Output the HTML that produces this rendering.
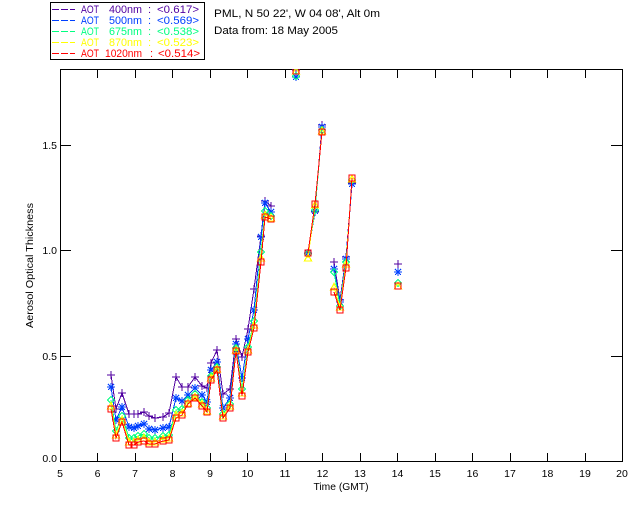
<!DOCTYPE html>
<html><head><meta charset="utf-8"><style>
html,body{margin:0;padding:0;background:#fff;width:640px;height:512px;overflow:hidden}
svg{display:block}
text{font-family:"Liberation Sans",sans-serif;font-size:10.5px;fill:#000}
.l text{font-size:11px}
.p{fill:#5000a0}.b{fill:#0040ff}.g{fill:#00ff80}.y{fill:#ffff00}.r{fill:#ff0000}
</style></head><body>
<svg width="640" height="512" viewBox="0 0 640 512" xmlns="http://www.w3.org/2000/svg">
<defs>
<marker id="mp" markerUnits="userSpaceOnUse" markerWidth="11" markerHeight="11" refX="5.5" refY="5.5" overflow="visible"><path d="M1.5 5.5H9.5M5.5 1.5V9.5" stroke="#5000a0" stroke-width="1" fill="none" shape-rendering="crispEdges"/></marker>
<marker id="mb" markerUnits="userSpaceOnUse" markerWidth="11" markerHeight="11" refX="5.5" refY="5.5" overflow="visible"><path d="M1.5 5.5H9.5M5.5 1.5V9.5M2.5 2.5L8.5 8.5M8.5 2.5L2.5 8.5" stroke="#0040ff" stroke-width="1" fill="none" shape-rendering="crispEdges"/><rect x="4" y="4" width="3" height="3" fill="#0040ff" shape-rendering="crispEdges"/></marker>
<marker id="mg" markerUnits="userSpaceOnUse" markerWidth="11" markerHeight="11" refX="5.5" refY="5.5" overflow="visible"><path d="M5.5 2L9 5.5L5.5 9L2 5.5Z" stroke="#00ff80" stroke-width="1" fill="none" shape-rendering="crispEdges"/></marker>
<marker id="my" markerUnits="userSpaceOnUse" markerWidth="11" markerHeight="11" refX="5.5" refY="5.5" overflow="visible"><path d="M5.5 2L9 8.5L2 8.5Z" stroke="#ffff00" stroke-width="1.3" fill="none" shape-rendering="crispEdges"/></marker>
<marker id="mr" markerUnits="userSpaceOnUse" markerWidth="11" markerHeight="11" refX="5.5" refY="5.5" overflow="visible"><rect x="2.5" y="2.5" width="6" height="6" stroke="#ff0000" stroke-width="1" fill="none" shape-rendering="crispEdges"/></marker>
<clipPath id="plot"><rect x="60" y="69" width="563" height="393"/></clipPath>
</defs>

<!-- legend -->
<rect x="50.5" y="2.5" width="154" height="57" fill="#fff" stroke="#000" stroke-width="1" shape-rendering="crispEdges"/>
<g stroke-width="1" stroke-dasharray="7 2" shape-rendering="crispEdges">
<path d="M52 9.5H75" stroke="#5000a0"/>
<path d="M52 20.5H75" stroke="#0040ff"/>
<path d="M52 31.5H75" stroke="#00ff80"/>
<path d="M52 42.5H75" stroke="#ffff00"/>
<path d="M52 53.5H75" stroke="#ff0000"/>
</g>
<g class="l">
<text class="p" x="81" y="13" textLength="18" lengthAdjust="spacingAndGlyphs">AOT</text><text class="p" x="109" y="13" textLength="33" lengthAdjust="spacingAndGlyphs">400nm</text><text class="p" x="148" y="13">:</text><text class="p" x="157" y="13" textLength="42" lengthAdjust="spacingAndGlyphs">&lt;0.617&gt;</text>
<text class="b" x="81" y="24" textLength="18" lengthAdjust="spacingAndGlyphs">AOT</text><text class="b" x="109" y="24" textLength="33" lengthAdjust="spacingAndGlyphs">500nm</text><text class="b" x="148" y="24">:</text><text class="b" x="157" y="24" textLength="42" lengthAdjust="spacingAndGlyphs">&lt;0.569&gt;</text>
<text class="g" x="81" y="35" textLength="18" lengthAdjust="spacingAndGlyphs">AOT</text><text class="g" x="109" y="35" textLength="33" lengthAdjust="spacingAndGlyphs">675nm</text><text class="g" x="148" y="35">:</text><text class="g" x="157" y="35" textLength="42" lengthAdjust="spacingAndGlyphs">&lt;0.538&gt;</text>
<text class="y" x="81" y="46" textLength="18" lengthAdjust="spacingAndGlyphs">AOT</text><text class="y" x="109" y="46" textLength="33" lengthAdjust="spacingAndGlyphs">870nm</text><text class="y" x="148" y="46">:</text><text class="y" x="157" y="46" textLength="42" lengthAdjust="spacingAndGlyphs">&lt;0.523&gt;</text>
<text class="r" x="81" y="57" textLength="18" lengthAdjust="spacingAndGlyphs">AOT</text><text class="r" x="105" y="57" textLength="37" lengthAdjust="spacingAndGlyphs">1020nm</text><text class="r" x="150" y="57">:</text><text class="r" x="158" y="57" textLength="42" lengthAdjust="spacingAndGlyphs">&lt;0.514&gt;</text>
<text x="214" y="17" textLength="166" lengthAdjust="spacingAndGlyphs">PML, N 50 22', W 04 08', Alt 0m</text>
<text x="214" y="34" textLength="124" lengthAdjust="spacingAndGlyphs">Data from: 18 May 2005</text>
</g>

<!-- axes -->
<g stroke="#000" stroke-width="1" fill="none" shape-rendering="crispEdges">
<rect x="60.5" y="69.5" width="562" height="392"/>
<path d="M97.5 461V453M135.5 461V453M172.5 461V453M210.5 461V453M247.5 461V453M285.5 461V453M322.5 461V453M360.5 461V453M397.5 461V453M435.5 461V453M472.5 461V453M510.5 461V453M547.5 461V453M585.5 461V453"/>
<path d="M97.5 70V78M135.5 70V78M172.5 70V78M210.5 70V78M247.5 70V78M285.5 70V78M322.5 70V78M360.5 70V78M397.5 70V78M435.5 70V78M472.5 70V78M510.5 70V78M547.5 70V78M585.5 70V78"/>
<path d="M60 356.5H71M60 250.5H71M60 145.5H71M622 356.5H611M622 250.5H611M622 145.5H611"/>
</g>
<g text-anchor="middle">
<text x="60" y="477">5</text><text x="97.5" y="477">6</text><text x="135" y="477">7</text><text x="172.5" y="477">8</text><text x="210" y="477">9</text><text x="247.5" y="477">10</text><text x="285" y="477">11</text><text x="322.5" y="477">12</text><text x="360" y="477">13</text><text x="397.5" y="477">14</text><text x="435" y="477">15</text><text x="472.5" y="477">16</text><text x="510" y="477">17</text><text x="547.5" y="477">18</text><text x="585" y="477">19</text><text x="622" y="477">20</text>
<text x="341" y="490" textLength="55" lengthAdjust="spacingAndGlyphs">Time (GMT)</text>
</g>
<g text-anchor="end">
<text x="57" y="462">0.0</text><text x="57" y="360">0.5</text><text x="57" y="254">1.0</text><text x="57" y="149">1.5</text>
</g>
<text transform="translate(33 328) rotate(-90)" textLength="125" lengthAdjust="spacingAndGlyphs">Aerosol Optical Thickness</text>

<!-- data -->
<g clip-path="url(#plot)" fill="none" stroke-width="1" shape-rendering="crispEdges">
<g stroke="#5000a0" style="marker:url(#mp)">
<polyline points="111,375 116,409 122,393 129,414 134,414 138,414 144,412 149,416 155,418 163,417 169,413 176,377 182,387 188,387 195,377 202,386 207,388 211,363 217,350 223,394 230,389 236,339 242,357 248,329 254,289 261,236 265,201 271,206"/>
<polyline points="296,70 296,70"/>
<polyline points="308,253 315,212 322,125"/>
<polyline points="334,262 340,300 346,257 352,183"/>
<polyline points="398,264 398,264"/>
</g>
<g stroke="#0040ff" style="marker:url(#mb)">
<polyline points="111,387 116,420 122,407 129,427 134,428 138,426 144,424 149,429 155,430 163,428 169,427 176,398 182,401 188,395 195,388 202,395 207,402 211,370 217,362 223,408 230,398 236,344 242,378 248,339 254,310 261,237 265,203 271,212"/>
<polyline points="296,77 296,77"/>
<polyline points="308,253 315,211 322,127"/>
<polyline points="334,269 340,302 346,259 352,184"/>
<polyline points="398,272 398,272"/>
</g>
<g stroke="#00ff80" style="marker:url(#mg)">
<polyline points="111,400 116,431 122,416 129,438 134,438 138,436 144,434 149,438 155,438 163,436 169,435 176,410 182,409 188,400 195,394 202,402 207,408 211,376 217,367 223,414 230,404 236,348 242,389 248,347 254,321 261,252 265,211 271,216"/>
<polyline points="296,76 296,76"/>
<polyline points="308,254 315,210 322,130"/>
<polyline points="334,272 340,306 346,262 352,180"/>
<polyline points="398,283 398,283"/>
</g>
<g stroke="#ffff00" style="marker:url(#my)">
<polyline points="111,406 116,435 122,420 129,442 134,442 138,440 144,438 149,442 155,442 163,439 169,438 176,415 182,413 188,403 195,397 202,404 207,411 211,378 217,369 223,416 230,406 236,350 242,393 248,350 254,325 261,258 265,215 271,218"/>
<polyline points="296,71 296,71"/>
<polyline points="308,258 315,205 322,131"/>
<polyline points="334,287 340,307 346,264 352,179"/>
<polyline points="398,286 398,286"/>
</g>
<g stroke="#ff0000" style="marker:url(#mr)">
<polyline points="111,409 116,438 122,422 129,445 134,445 138,442 144,441 149,444 155,444 163,441 169,440 176,418 182,415 188,404 195,398 202,406 207,412 211,380 217,370 223,418 230,408 236,351 242,396 248,352 254,328 261,262 265,217 271,219"/>
<polyline points="296,71 296,71"/>
<polyline points="308,253 315,204 322,132"/>
<polyline points="334,292 340,310 346,268 352,178"/>
<polyline points="398,286 398,286"/>
</g>
</g>
</svg>
</body></html>
